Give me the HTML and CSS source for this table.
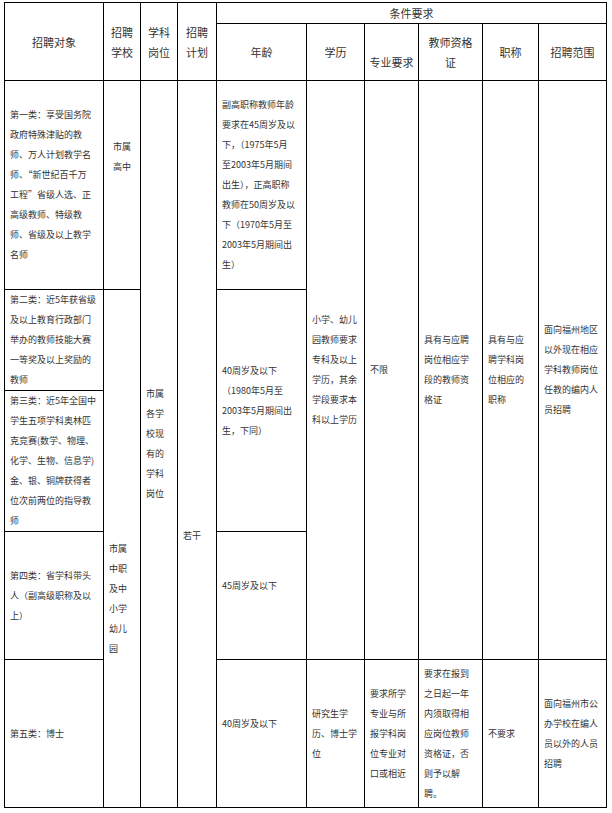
FILE: index.html
```html
<!DOCTYPE html>
<html lang="zh-CN">
<head>
<meta charset="utf-8">
<title>招聘条件</title>
<link rel="stylesheet" href="styles.css">
</head>
<body>
<table class="recruit">
  <colgroup>
    <col class="c-target">
    <col class="c-school">
    <col class="c-post">
    <col class="c-plan">
    <col class="c-age">
    <col class="c-edu">
    <col class="c-major">
    <col class="c-cert">
    <col class="c-title">
    <col class="c-scope">
  </colgroup>
  <thead>
    <tr class="h1">
      <th rowspan="2">招聘对象</th>
      <th rowspan="2">招聘<br>学校</th>
      <th rowspan="2">学科<br>岗位</th>
      <th rowspan="2">招聘<br>计划</th>
      <th colspan="6">条件要求</th>
    </tr>
    <tr class="h2">
      <th>年龄</th>
      <th>学历</th>
      <th class="low">专业要求</th>
      <th>教师资格<br>证</th>
      <th>职称</th>
      <th>招聘范围</th>
    </tr>
  </thead>
  <tbody>
    <tr class="r1">
      <td>第一类：享受国务院<br>政府特殊津贴的教<br>师、万人计划教学名<br>师、“新世纪百千万<br>工程”省级人选、正<br>高级教师、特级教<br>师、省级及以上教学<br>名师</td>
      <td class="center raise">市属<br>高中</td>
      <td rowspan="5">市属<br>各学<br>校现<br>有的<br>学科<br>岗位</td>
      <td rowspan="5" class="plan">若干</td>
      <td>副高职称教师年龄<br>要求在45周岁及以<br>下，（1975年5月<br>至2003年5月期间<br>出生），正高职称<br>教师在50周岁及以<br>下（1970年5月至<br>2003年5月期间出<br>生）</td>
      <td rowspan="4">小学、幼儿<br>园教师要求<br>专科及以上<br>学历，其余<br>学段要求本<br>科以上学历</td>
      <td rowspan="4">不限</td>
      <td rowspan="4">具有与应聘<br>岗位相应学<br>段的教师资<br>格证</td>
      <td rowspan="4">具有与应<br>聘学科岗<br>位相应的<br>职称</td>
      <td rowspan="4">面向福州地区<br>以外现在相应<br>学科教师岗位<br>任教的编内人<br>员招聘</td>
    </tr>
    <tr class="r2">
      <td>第二类：近5年获省级<br>及以上教育行政部门<br>举办的教师技能大赛<br>一等奖及以上奖励的<br>教师</td>
      <td rowspan="4" class="sink">市属<br>中职<br>及中<br>小学<br>幼儿<br>园</td>
      <td rowspan="2" class="lift">40周岁及以下<br>（1980年5月至<br>2003年5月期间出<br>生，下同）</td>
    </tr>
    <tr class="r3">
      <td>第三类：近5年全国中<br>学生五项学科奥林匹<br>克竞赛(数学、物理、<br>化学、生物、信息学)<br>金、银、铜牌获得者<br>位次前两位的指导教<br>师</td>
    </tr>
    <tr class="r4">
      <td>第四类：省学科带头<br>人（副高级职称及以<br>上）</td>
      <td class="lift">45周岁及以下</td>
    </tr>
    <tr class="r5">
      <td>第五类：博士</td>
      <td class="lift">40周岁及以下</td>
      <td>研究生学<br>历、博士学<br>位</td>
      <td>要求所学<br>专业与所<br>报学科岗<br>位专业对<br>口或相近</td>
      <td>要求在报到<br>之日起一年<br>内须取得相<br>应岗位教师<br>资格证，否<br>则予以解<br>聘。</td>
      <td>不要求</td>
      <td>面向福州市公<br>办学校在编人<br>员以外的人员<br>招聘</td>
    </tr>
  </tbody>
</table>
</body>
</html>
```

FILE: styles.css
```css
html, body {
  margin: 0;
  padding: 0;
  background: #fff;
}

body {
  font-family: "Noto Sans CJK SC", "Noto Sans", "Liberation Sans", sans-serif;
  color: #333;
}

.recruit {
  border-collapse: collapse;
  table-layout: fixed;
  width: 603px;
  margin: 2px 0 0 4px;
}

.recruit th,
.recruit td {
  border: 1px solid #000;
  line-height: 20px;
  vertical-align: middle;
  white-space: nowrap;
}

.recruit th {
  font-size: 11px;
  font-weight: normal;
  text-align: center;
  padding: 0 2px;
}

.recruit td {
  font-size: 9px;
  text-align: left;
  padding: 0 5px;
}

.c-target { width: 99px; }
.c-school { width: 37px; }
.c-post { width: 37px; }
.c-plan { width: 39px; }
.c-age { width: 90px; }
.c-edu { width: 58px; }
.c-major { width: 54px; }
.c-cert { width: 64px; }
.c-title { width: 56px; }
.c-scope { width: 68px; }

.h1 { height: 21px; }
.h2 { height: 57px; }
.r1 { height: 209px; }
.r2 { height: 101px; }
.r3 { height: 141px; }
.r4 { height: 128px; }
.r5 { height: 148px; }

.recruit th.low { padding-top: 20px; }

.recruit td.center { text-align: center; }
.recruit td.raise { padding-bottom: 56px; }
.recruit td.sink { padding-top: 100px; }
.recruit td.plan { padding-top: 183px; }
.recruit td.lift { padding-bottom: 20px; }
```
